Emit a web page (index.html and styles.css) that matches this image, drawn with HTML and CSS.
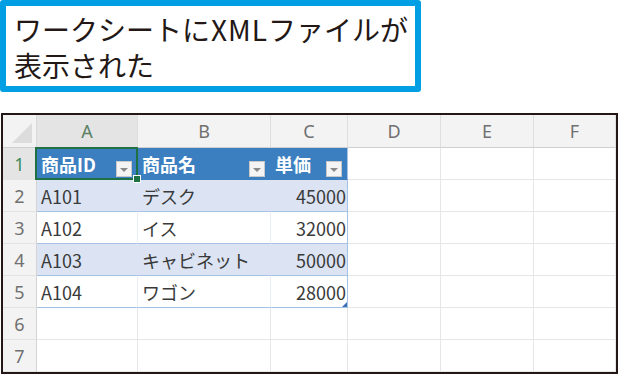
FILE: index.html
```html
<!DOCTYPE html>
<html lang="ja">
<head>
    <meta charset="UTF-8">
    <title>XMLファイルの表示</title>
    <link rel="stylesheet" href="styles.css">
</head>
<body>
    <div class="callout">
        <div class="line">ワークシートに<span class="latin">XML</span>ファイルが</div>
        <div class="line">表示された</div>
    </div>

    <div class="sheet">
        <div class="corner"></div>
        <div class="colhead active">A</div>
        <div class="colhead">B</div>
        <div class="colhead">C</div>
        <div class="colhead">D</div>
        <div class="colhead">E</div>
        <div class="colhead">F</div>

        <div class="rowhead active">1</div>
        <div class="cell th sel">商品ID<span class="filter"></span><span class="handle"></span></div>
        <div class="cell th">商品名<span class="filter"></span></div>
        <div class="cell th th-last">単価<span class="filter"></span></div>
        <div class="cell"></div>
        <div class="cell"></div>
        <div class="cell"></div>

        <div class="rowhead">2</div>
        <div class="cell td band">A101</div>
        <div class="cell td band">デスク</div>
        <div class="cell td band num last">45000</div>
        <div class="cell"></div>
        <div class="cell"></div>
        <div class="cell"></div>

        <div class="rowhead">3</div>
        <div class="cell td">A102</div>
        <div class="cell td">イス</div>
        <div class="cell td num last">32000</div>
        <div class="cell"></div>
        <div class="cell"></div>
        <div class="cell"></div>

        <div class="rowhead">4</div>
        <div class="cell td band">A103</div>
        <div class="cell td band">キャビネット</div>
        <div class="cell td band num last">50000</div>
        <div class="cell"></div>
        <div class="cell"></div>
        <div class="cell"></div>

        <div class="rowhead">5</div>
        <div class="cell td bottom">A104</div>
        <div class="cell td bottom">ワゴン</div>
        <div class="cell td bottom num last">28000<span class="resize"></span></div>
        <div class="cell"></div>
        <div class="cell"></div>
        <div class="cell"></div>

        <div class="rowhead">6</div>
        <div class="cell"></div>
        <div class="cell"></div>
        <div class="cell"></div>
        <div class="cell"></div>
        <div class="cell"></div>
        <div class="cell"></div>

        <div class="rowhead">7</div>
        <div class="cell"></div>
        <div class="cell"></div>
        <div class="cell"></div>
        <div class="cell"></div>
        <div class="cell"></div>
        <div class="cell"></div>
    </div>
</body>
</html>
```

FILE: styles.css
```css
body {
    margin: 0;
    background: #fff;
    font-family: "Noto Sans CJK JP", "Noto Sans", sans-serif;
    width: 619px;
    height: 376px;
    overflow: hidden;
}

.callout {
    box-sizing: border-box;
    width: 421px;
    height: 92px;
    border: 6px solid #009fe3;
    border-radius: 3px;
    padding: 5px 0 0 8px;
    font-size: 28px;
    color: #231815;
    white-space: nowrap;
    display: flex;
    flex-direction: column;
    gap: 0;
}

.callout .line {
    line-height: 36px;
    height: 36px;
}

.callout .latin {
    letter-spacing: 1px;
    padding-left: 1px;
}

.sheet {
    box-sizing: border-box;
    margin: 21px 0 0 1px;
    width: 617px;
    height: 261px;
    border: 2px solid #231815;
    display: grid;
    grid-template-columns: 34px 101px 133px 77px 93px 93px 1fr;
    grid-template-rows: 33px repeat(7, 32px);
    overflow: hidden;
    font-size: 18px;
    color: #333;
}

.corner {
    background: #f3f3f3;
    border-right: 1px solid #d9d9d9;
    border-bottom: 1px solid #cfcfcf;
    position: relative;
}

.corner::after {
    content: "";
    position: absolute;
    right: 4px;
    bottom: 4px;
    border-style: solid;
    border-width: 0 0 20px 20px;
    border-color: transparent transparent #dcdcdc transparent;
}

.colhead {
    background: #f3f3f3;
    border-right: 1px solid #dedede;
    border-bottom: 1px solid #cfcfcf;
    display: flex;
    align-items: center;
    justify-content: center;
    color: #707070;
    font-family: "Noto Sans", sans-serif;
}

.colhead.active {
    background: #e4e4e4;
    color: #5a8066;
    border-bottom-color: #b9c7bd;
}

.rowhead {
    background: #f3f3f3;
    border-right: 1px solid #d4d4d4;
    border-bottom: 1px solid #e3e3e3;
    display: flex;
    align-items: center;
    justify-content: center;
    color: #707070;
    font-family: "Noto Sans", sans-serif;
}

.rowhead.active {
    background: #e4e4e4;
    color: #3f8a5a;
}

.cell {
    border-right: 1px solid #e6e6e6;
    border-bottom: 1px solid #e6e6e6;
    display: flex;
    align-items: center;
    padding: 0 4px;
    white-space: nowrap;
    position: relative;
}

.th {
    background: #3c7fc1;
    color: #fff;
    font-weight: bold;
    border-right-color: #3c7fc1;
    border-bottom-color: #3c7fc1;
    justify-content: space-between;
    padding-right: 5px;
}

.th-last {
    border-right-color: #a5c1e6;
}

.filter {
    align-self: flex-end;
    margin-bottom: 2px;
    width: 16px;
    height: 16px;
    box-sizing: border-box;
    background: #f4f4f4;
    border: 1px solid #c9c9c9;
    position: relative;
}

.filter::after {
    content: "";
    position: absolute;
    left: 3px;
    top: 6px;
    border-style: solid;
    border-width: 4px 4px 0 4px;
    border-color: #8a8a8a transparent transparent transparent;
}

.sel::before {
    content: "";
    position: absolute;
    left: -2px;
    top: -1px;
    right: -1px;
    bottom: -1px;
    border: 2px solid #1e7145;
}

.handle {
    position: absolute;
    right: -4px;
    bottom: -4px;
    width: 6px;
    height: 6px;
    background: #1e7145;
    border: 1px solid #fff;
    z-index: 1;
}

.td {
    border-bottom-color: #a5c1e6;
    border-right-color: #e9eef7;
    color: #3a3a3a;
}

.band {
    background: #dce4f3;
    border-right-color: #dce4f3;
}

.last {
    border-right-color: #a5c1e6;
}

.num {
    justify-content: flex-end;
    padding-right: 1px;
}

.resize {
    position: absolute;
    right: 0;
    bottom: 0;
    border-style: solid;
    border-width: 0 0 5px 5px;
    border-color: transparent transparent #3c6fb8 transparent;
}
```
